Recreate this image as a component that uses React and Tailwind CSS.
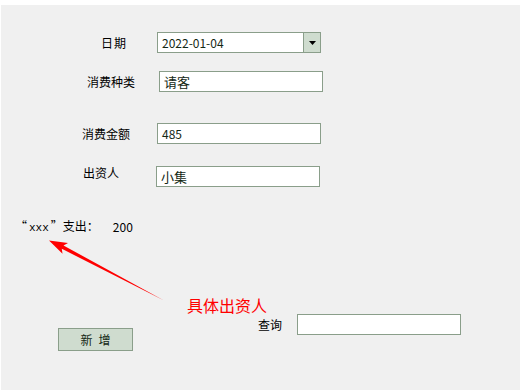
const FONT = "font-['SimSun','Noto_Sans_CJK_SC',sans-serif]"

function Field({ value, className = '' }) {
  return (
    <div
      className={`h-[21px] w-[164px] border border-[#8a9e8a] bg-white px-[4px] flex items-center text-[12px] text-[#142814] ${className}`}
    >
      {value}
    </div>
  )
}

export default function App() {
  return (
    <div className={`w-[520px] h-[390px] bg-white pt-[5px] pl-[1px] ${FONT}`}>
      <div className="relative h-[385px] bg-[#f0f0f0] text-[12px] text-black leading-none">
        {/* ── 日期 ─────────────────────────── */}
        <div className="flex items-center pt-[27px]">
          <span className="w-[156px] pl-[100px] tracking-[1px]">日期</span>
          <div className="h-[21px] w-[164px] border border-[#8a9e8a] bg-white flex">
            <span className="flex-1 flex items-center px-[4px] text-[#142814]">2022-01-04</span>
            <span className="w-[17px] border-l border-[#8a9e8a] bg-[#cfdccf] flex items-center justify-center">
              <svg width="7" height="4" viewBox="0 0 7 4">
                <path d="M0 0h7L3.5 4z" fill="#000" />
              </svg>
            </span>
          </div>
        </div>

        {/* ── 消费种类 ─────────────────────── */}
        <div className="flex items-center pt-[18px]">
          <span className="w-[158px] pl-[86px]">消费种类</span>
          <Field value="请客" className="text-[13px]" />
        </div>

        {/* ── 消费金额 ─────────────────────── */}
        <div className="flex items-center pt-[31px]">
          <span className="w-[156px] pl-[81px]">消费金额</span>
          <Field value="485" />
        </div>

        {/* ── 出资人 ───────────────────────── */}
        <div className="flex pt-[22px]">
          <span className="w-[155px] pl-[82px] pt-[1px]">出资人</span>
          <Field value="小集" className="text-[13px]" />
        </div>

        {/* ── 支出 ─────────────────────────── */}
        <div className="flex items-center pt-[33px] pl-[14px]">
          <span>
            “<span className="font-['Liberation_Mono',monospace] text-[11px] mx-[2px]">xxx</span>”<span>支出：</span>
          </span>
          <span className="ml-[14px]">200</span>
        </div>

        {/* ── 查询 ─────────────────────────── */}
        <div className="flex items-center pt-[80px]">
          <span className="w-[296px] pl-[257px]">查询</span>
          <Field value="" />
        </div>

        {/* ── 新增 ─────────────────────────── */}
        <div className="pl-[57px] -mt-[7px]">
          <button className="h-[23px] w-[75px] border border-[#8a9e8a] bg-[#cfdccf] text-[12px] text-[#142814] tracking-[6px] pl-[6px]">
            新增
          </button>
        </div>

        {/* ── annotation ───────────────────── */}
        <svg className="absolute left-0 top-0 pointer-events-none" width="519" height="385">
          <polygon
            points="48,235.5 67,238 62.5,240.5 163,295.5 60.8,243.8 61.5,248.8"
            fill="#ff0000"
          />
        </svg>
        <span className="absolute left-[186px] top-[292px] text-[16px] text-[#ff0000]">具体出资人</span>
      </div>
    </div>
  )
}
